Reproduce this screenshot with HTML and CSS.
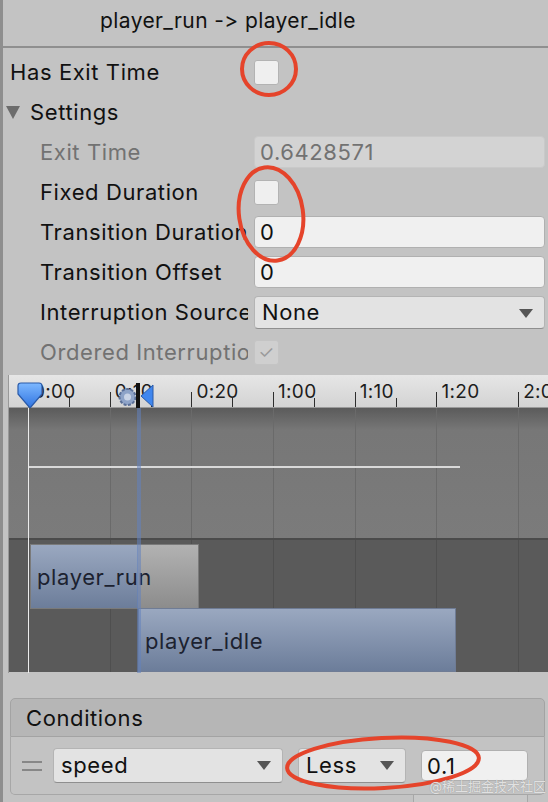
FILE: index.html
```html
<!DOCTYPE html>
<html lang="en">

<head>
    <meta charset="UTF-8">
    <meta name="viewport" content="width=device-width, initial-scale=1.0">
    <title>Transition Inspector</title>
    <link rel="stylesheet" href="styles.css">
</head>

<body>
    <div class="inspector">
        <div class="title">player_run -&gt; player_idle</div>

        <div class="fields">
            <div class="row">
                <div class="label">Has Exit Time</div>
                <div class="checkbox"></div>
            </div>
            <div class="row foldout">
                <span class="arrow"></span>
                <span>Settings</span>
            </div>
            <div class="row sub disabled">
                <div class="label">Exit Time</div>
                <div class="input readonly">0.6428571</div>
            </div>
            <div class="row sub">
                <div class="label">Fixed Duration</div>
                <div class="checkbox"></div>
            </div>
            <div class="row sub">
                <div class="label">Transition Duration (s)</div>
                <div class="input">0</div>
            </div>
            <div class="row sub">
                <div class="label">Transition Offset</div>
                <div class="input">0</div>
            </div>
            <div class="row sub">
                <div class="label">Interruption Source</div>
                <div class="dropdown">None<span class="caret"></span></div>
            </div>
            <div class="row sub disabled">
                <div class="label">Ordered Interruption</div>
                <div class="checkbox checked">&#10003;</div>
            </div>
        </div>

        <div class="timeline">
            <div class="ruler">
                <div class="ruler-labels">
                    <span>0:00</span><span>0:10</span><span>0:20</span><span>1:00</span><span>1:10</span><span>1:20</span><span>2:00</span>
                </div>
                <svg class="marker-start" width="26" height="27" viewBox="0 0 26 27">
                    <defs>
                        <linearGradient id="mk" x1="0" y1="0" x2="0" y2="1">
                            <stop offset="0" stop-color="#7db8ff"/>
                            <stop offset="1" stop-color="#2f73e0"/>
                        </linearGradient>
                    </defs>
                    <path d="M4 1 H22 Q25 1 25 4 V12 L13 26 L1 12 V4 Q1 1 4 1 Z" fill="url(#mk)" stroke="#2a5aa8" stroke-width="1.2"/>
                </svg>
                <svg class="marker-end" width="42" height="28" viewBox="0 0 42 28">
                    <circle cx="9.5" cy="15" r="8" fill="#8ea3c8" stroke="#5a6f98" stroke-width="2" stroke-dasharray="3 1.5"/>
                    <circle cx="9.5" cy="15" r="3.5" fill="#c9d3e6"/>
                    <rect x="18" y="1" width="4" height="27" fill="#111"/>
                    <path d="M35 3 V25 L23 14 Z" fill="#3f86ee" stroke="#2a5aa8" stroke-width="1"/>
                </svg>
            </div>
            <div class="curve">
                <div class="curve-line"></div>
            </div>
            <div class="clips">
                <div class="clip clip-run">
                    <div class="clip-fill"></div>
                    <span>player_run</span>
                </div>
                <div class="clip clip-idle"><span>player_idle</span></div>
            </div>
            <div class="start-line"></div>
            <div class="blend-band"></div>
        </div>

        <div class="conditions">
            <div class="cond-header">Conditions</div>
            <div class="cond-list">
                <div class="handle"></div>
                <div class="dropdown cond-param">speed<span class="caret"></span></div>
                <div class="dropdown cond-mode">Less<span class="caret"></span></div>
                <div class="input cond-value">0.1</div>
            </div>
            <div class="cond-footer"></div>
        </div>

        <svg class="annotations" width="548" height="802" viewBox="0 0 548 802">
            <ellipse cx="269" cy="69" rx="27" ry="26"/>
            <ellipse cx="271" cy="214" rx="32" ry="47" transform="rotate(-8 271 214)"/>
            <ellipse cx="383" cy="763" rx="96" ry="25" transform="rotate(-3 383 763)"/>
        </svg>
        <div class="watermark">@稀土掘金技术社区</div>
    </div>
</body>

</html>
```

FILE: styles.css
```css
* {
    box-sizing: border-box;
}

body {
    margin: 0;
    background-color: #c3c3c3;
    font-family: Inter, "Noto Sans", "Noto Sans CJK SC", sans-serif;
    font-variant-ligatures: none;
    font-feature-settings: "calt" 0;
    letter-spacing: 0.6px;
    color: #111;
}

.inspector {
    position: relative;
    width: 548px;
    height: 802px;
    overflow: hidden;
    border-left: 3px solid #8e8e8e;
}

.title {
    height: 48px;
    padding-left: 97px;
    line-height: 42px;
    font-size: 21px;
    letter-spacing: 0.4px;
    border-bottom: 2px solid #8f8f8f;
}

.fields {
    padding-top: 4px;
}

.row {
    display: flex;
    align-items: center;
    height: 40px;
    font-size: 22px;
}

.label {
    width: 245px;
    margin-right: 6px;
    padding-left: 7px;
    white-space: nowrap;
    overflow: hidden;
    flex-shrink: 0;
}

.row.sub .label {
    padding-left: 37px;
}

.disabled .label,
.disabled .input {
    color: #727272;
}

.foldout {
    padding-left: 3px;
    gap: 10px;
}

.arrow {
    width: 0;
    height: 0;
    border-left: 7px solid transparent;
    border-right: 7px solid transparent;
    border-top: 13px solid #6c6c6c;
}

.checkbox {
    width: 25px;
    height: 25px;
    background-color: #efefef;
    border: 1px solid #b3b3b3;
    border-radius: 3px;
}

.checkbox.checked {
    background-color: #cfcfcf;
    border-color: #c4c4c4;
    color: #9a9a9a;
    font-size: 18px;
    line-height: 23px;
    text-align: center;
}

.input {
    width: 291px;
    height: 32px;
    padding-left: 5px;
    line-height: 31px;
    background-color: #f0f0f0;
    border: 1px solid #b0b0b0;
    border-radius: 4px;
}

.input.readonly {
    background-color: #d3d3d3;
    border-color: #c9c9c9;
}

.dropdown {
    position: relative;
    width: 291px;
    height: 33px;
    padding-left: 7px;
    line-height: 31px;
    background-color: #e3e3e3;
    border: 1px solid #b4b4b4;
    border-bottom-color: #8f8f8f;
    border-radius: 4px;
}

.caret {
    position: absolute;
    right: 11px;
    top: 12px;
    width: 0;
    height: 0;
    border-left: 7px solid transparent;
    border-right: 7px solid transparent;
    border-top: 9px solid #555;
}

/* timeline */

.timeline {
    position: relative;
    margin: 3px 0 0 5px;
    width: 540px;
    height: 298px;
    border-left: 1px solid #999;
}

.ruler {
    position: relative;
    height: 33px;
    background:
        repeating-linear-gradient(90deg, transparent 0 19px, #2e2e2e 19px 20px, transparent 20px 81.7px) left bottom / 100% 15px no-repeat,
        repeating-linear-gradient(90deg, transparent 0 60px, #2e2e2e 60px 61px, transparent 61px 81.7px) left bottom / 100% 9px no-repeat,
        linear-gradient(#e6e6e6, #d3d3d3);
    border-bottom: 1px solid #9a9a9a;
}

.ruler-labels {
    display: flex;
    padding-left: 24px;
    padding-top: 7px;
    font-size: 19px;
    line-height: 20px;
    letter-spacing: 0.3px;
    color: #1d1d1d;
    white-space: nowrap;
}

.ruler-labels span {
    flex: 0 0 81.7px;
}

.marker-start {
    position: absolute;
    left: 8px;
    top: 7px;
}

.marker-end {
    position: absolute;
    left: 109px;
    top: 7px;
}

.curve {
    position: relative;
    height: 132px;
    background:
        repeating-linear-gradient(90deg, transparent 0 19px, #6a6a6a 19px 20px, transparent 20px 81.7px),
        linear-gradient(#5b5b5b, #777777 22px, #7b7b7b);
    border-bottom: 2px solid #4b4b4b;
}

.curve-line {
    position: absolute;
    left: 20px;
    top: 58px;
    width: 431px;
    height: 2px;
    background-color: #d9d9d9;
}

.clips {
    position: relative;
    height: 132px;
    background:
        repeating-linear-gradient(90deg, transparent 0 19px, #4f4f4f 19px 20px, transparent 20px 81.7px),
        #5a5a5a;
}

.clip {
    position: absolute;
    font-size: 22px;
    color: #1c2230;
    border: 1px solid #6f7c95;
    background: linear-gradient(#9aa8c0, #6c7d9a);
}

.clip span {
    position: relative;
    padding-left: 6px;
}

.clip-run {
    left: 21px;
    top: 4px;
    width: 169px;
    height: 65px;
    line-height: 64px;
    background: linear-gradient(#b2b2b2, #8c8c8c);
    border-color: #7a7a7a;
}

.clip-fill {
    position: absolute;
    left: 0;
    top: 0;
    bottom: 0;
    width: 107px;
    background: linear-gradient(#9aa8c0, #6c7d9a);
}

.clip-idle {
    left: 129px;
    top: 68px;
    width: 318px;
    height: 64px;
    line-height: 64px;
}

.start-line {
    position: absolute;
    left: 19px;
    top: 33px;
    bottom: 0;
    width: 1px;
    background-color: #ececec;
}

.blend-band {
    position: absolute;
    left: 128px;
    top: 33px;
    bottom: 0;
    width: 4px;
    background-color: rgba(98, 130, 190, 0.55);
}

/* conditions */

.conditions {
    margin: 25px 0 0 7px;
    width: 535px;
}

.cond-header {
    height: 39px;
    padding-left: 15px;
    line-height: 39px;
    font-size: 22px;
    background-color: #b6b6b6;
    border: 1px solid #a3a3a3;
    border-radius: 5px 5px 0 0;
}

.cond-list {
    display: flex;
    align-items: center;
    gap: 13px;
    height: 58px;
    padding-left: 11px;
    border: 1px solid #a7a7a7;
    border-top: none;
    border-radius: 0 0 5px 5px;
    font-size: 22px;
}

.handle {
    width: 20px;
    height: 10px;
    border-top: 2px solid #878787;
    border-bottom: 2px solid #878787;
    margin-right: -2px;
}

.cond-list .dropdown {
    height: 35px;
    line-height: 33px;
}

.cond-param {
    width: 230px;
}

.cond-mode {
    width: 108px;
    margin-left: 2px;
}

.cond-value {
    width: 107px;
    height: 31px;
    margin-left: 2px;
}

.cond-footer {
    margin-left: 403px;
    width: 115px;
    height: 12px;
    border: 1px solid #a7a7a7;
    border-top: none;
    background-color: #c8c8c8;
}

.annotations {
    position: absolute;
    left: -3px;
    top: 0;
    pointer-events: none;
}

.annotations ellipse {
    fill: none;
    stroke: #e5442b;
    stroke-width: 4;
}

.watermark {
    position: absolute;
    right: 2px;
    bottom: 7px;
    font-size: 13px;
    letter-spacing: 0;
    color: rgba(240, 240, 240, 0.85);
    text-shadow: 0 0 1px #8a8a8a;
}
```
